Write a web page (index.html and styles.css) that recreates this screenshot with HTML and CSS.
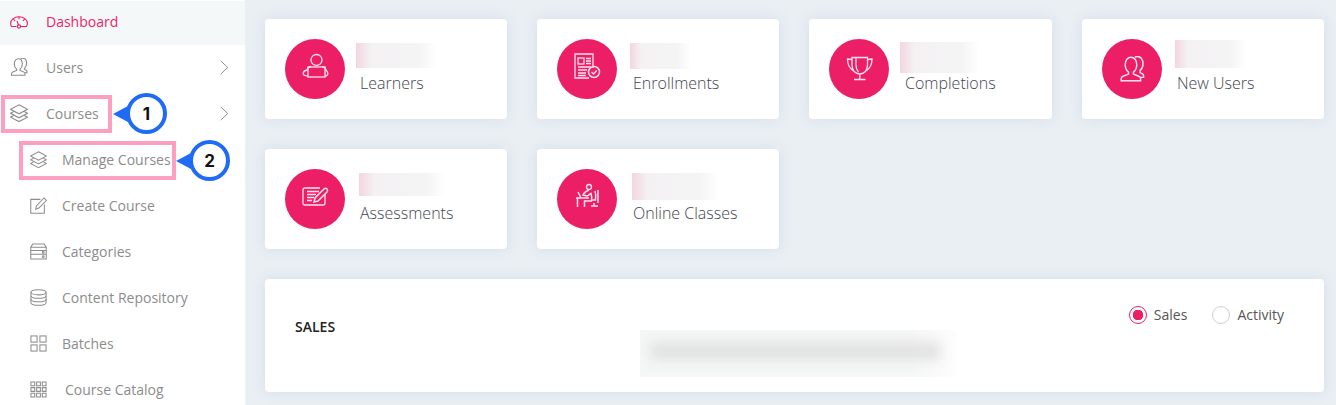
FILE: index.html
```html
<!DOCTYPE html>
<html lang="en">
<head>
    <meta charset="UTF-8">
    <title>Dashboard</title>
    <link rel="stylesheet" href="styles.css">
</head>
<body>
    <svg class="sprite" aria-hidden="true">
        <defs>
            <symbol id="person" viewBox="0 0 18 18">
                <path d="M6.6 11.2c-1.4-1-2.3-3-2.3-5.100C4.300 3 6 .8 8.300.8s4 2.200 4 5.300c0 2.100-.9 4.100-2.300 5.100v1.300l3.700 1.500c.8.3 1.300 1 1.300 1.900v1.300H1.500v-1.300c0-.9.5-1.600 1.300-1.900l3.800-1.500z"/>
                <path d="M11 .9c.5-.4 1.200-.6 1.800-.6 2.200 0 3.800 2.100 3.800 5 0 2-.8 3.800-2 4.800v1.400l1.700.8c.4.3.7.7.7 1.300v1.200h-2"/>
            </symbol>
            <symbol id="layers" viewBox="0 0 18 18">
                <path d="M9 .8 17.500 5.300 9 9.800 .5 5.300z"/>
                <path d="M3.800 7.600 .5 9.300l8.500 4.500 8.500-4.500-3.300-1.700"/>
                <path d="M3.800 11.500 .5 13.200 9 17.600l8.500-4.400-3.300-1.700"/>
            </symbol>
        </defs>
    </svg>

    <div class="layout">
        <nav class="sidebar">
            <a class="nav-item active">
                <svg class="nav-icon" viewBox="0 0 18 18">
                    <path d="M6.500 13.500H1.500C1 12.500.6 11.500.6 10.500.6 6.500 4.400 3.800 9 3.800s8.400 2.700 8.400 6.700c0 1-.4 2-.9 3H10.800"/>
                    <circle cx="9" cy="13.500" r="1.600"/>
                    <path d="M8.500 12 7 8M9 3.800v2.500M3.300 6.200l1.800 1.600M14.700 6.200l-1.800 1.600"/>
                </svg>
                <span>Dashboard</span>
            </a>
            <a class="nav-item">
                <svg class="nav-icon"><use href="#person"/></svg>
                <span>Users</span>
                <svg class="chevron" viewBox="0 0 10 16"><path d="M1.500 1 9 8l-7.500 7"/></svg>
            </a>
            <a class="nav-item">
                <svg class="nav-icon"><use href="#layers"/></svg>
                <span>Courses</span>
                <svg class="chevron" viewBox="0 0 10 16"><path d="M1.500 1 9 8l-7.500 7"/></svg>
            </a>
            <a class="nav-item sub">
                <svg class="nav-icon"><use href="#layers"/></svg>
                <span>Manage Courses</span>
            </a>
            <a class="nav-item sub">
                <svg class="nav-icon" viewBox="0 0 18 18">
                    <path d="M11 2.500H.8v14.700h14.400V8"/>
                    <path d="M6 13 6.800 9.500 14.800 1l2.600 2.500-8 8.200z"/>
                </svg>
                <span>Create Course</span>
            </a>
            <a class="nav-item sub">
                <svg class="nav-icon" viewBox="0 0 18 18">
                    <path d="M.8 8V4.500L3 1h12l2.200 3.500V8z"/>
                    <path d="M.8 4.500h16.400M.8 8v4h16.400V8M.8 12v5h16.400v-5"/>
                    <circle cx="14" cy="10" r=".9"/>
                    <circle cx="14" cy="14.500" r=".9"/>
                </svg>
                <span>Categories</span>
            </a>
            <a class="nav-item sub">
                <svg class="nav-icon" viewBox="0 0 18 18">
                    <ellipse cx="9" cy="3.500" rx="8" ry="2.700"/>
                    <path d="M1 3.500v11C1 16 4.600 17.200 9 17.200s8-1.200 8-2.700v-11"/>
                    <path d="M1 7.200c0 1.500 3.600 2.700 8 2.700s8-1.200 8-2.700M1 10.900c0 1.500 3.600 2.700 8 2.700s8-1.200 8-2.700"/>
                </svg>
                <span>Content Repository</span>
            </a>
            <a class="nav-item sub">
                <svg class="nav-icon" viewBox="0 0 18 18">
                    <rect x="1" y="1" width="6.500" height="6.500"/>
                    <rect x="10.500" y="1" width="6.500" height="6.500"/>
                    <rect x="1" y="10.500" width="6.500" height="6.500"/>
                    <rect x="10.500" y="10.500" width="6.500" height="6.500"/>
                </svg>
                <span>Batches</span>
            </a>
            <a class="nav-item sub catalog">
                <svg class="nav-icon" viewBox="0 0 18 18">
                    <path d="M1 1h4v4H1zM7 1h4v4H7zM13 1h4v4h-4zM1 7h4v4H1zM7 7h4v4H7zM13 7h4v4h-4zM1 13h4v4H1zM7 13h4v4H7zM13 13h4v4h-4z"/>
                </svg>
                <span>Course Catalog</span>
            </a>
        </nav>

        <main class="content">
            <section class="stats">
                <div class="stat-card">
                    <div class="stat-icon">
                        <svg viewBox="0 0 60 60">
                            <circle cx="31.500" cy="21" r="5.500"/>
                            <rect x="23" y="28" width="17" height="10"/>
                            <path d="M26 27.500c-2 .3-3.500 1.500-4 3.500-2 .5-3.800 1.800-3.800 3.600 0 1.800 1.600 2.400 4.800 2.400M37 27.500c2 .3 3.500 1.500 4 3.500 1 1 1.800 2.200 1.800 3.500 0 2-1.500 2.500-2.800 2.500"/>
                        </svg>
                    </div>
                    <div class="stat-text">
                        <div class="redacted redacted-learners"></div>
                        <div class="stat-label">Learners</div>
                    </div>
                </div>
                <div class="stat-card">
                    <div class="stat-icon">
                        <svg viewBox="0 0 60 60">
                            <path d="M32 39H18V15h18v14"/>
                            <rect x="21" y="19" width="6" height="6"/>
                            <path d="M29 19.500h5M29 22h5M29 24.500h5M21 28h13M21 31h9M21 34h8M21 36.500h8"/>
                            <circle cx="37" cy="33" r="5.500" class="heavy"/>
                            <path d="M34.500 33l2 2 3.200-3.600" class="heavy"/>
                        </svg>
                    </div>
                    <div class="stat-text wide">
                        <div class="redacted redacted-enrollments"></div>
                        <div class="stat-label">Enrollments</div>
                    </div>
                </div>
                <div class="stat-card">
                    <div class="stat-icon">
                        <svg viewBox="0 0 60 60">
                            <path d="M23 18.500h15.500v7c0 5.500-3 9-7.700 9.500-4.800-.5-7.800-4-7.800-9.500z"/>
                            <path d="M23 20.500l-4.500-.5c0 5 1.500 9 6 12M38.500 20.500l4.500-.5c0 5-1.500 9-6 12M27 19v7c0 3.500 1 5.500 2.500 7"/>
                            <path d="M30.800 35v5M25 40.500h11.500"/>
                        </svg>
                    </div>
                    <div class="stat-text wide">
                        <div class="redacted redacted-completions"></div>
                        <div class="stat-label">Completions</div>
                    </div>
                </div>
                <div class="stat-card">
                    <div class="stat-icon">
                        <svg class="stat-person" viewBox="0 0 18 18"><use href="#person"/></svg>
                    </div>
                    <div class="stat-text">
                        <div class="redacted redacted-new-users"></div>
                        <div class="stat-label">New Users</div>
                    </div>
                </div>
                <div class="stat-card">
                    <div class="stat-icon">
                        <svg viewBox="0 0 60 60">
                            <path d="M35 19H20c-1 0-2 .8-2 2v13c0 1.200 1 2 2 2h18c1.200 0 2-.8 2-2V25"/>
                            <path d="M22 22.500h12M22 25.500h9M22 28.500h7M22 31.500h5" class="heavy"/>
                            <path d="M29 33l1-4 9-9c1-1 2.200-1 3 0s.8 2 0 3l-9 9z" class="heavy"/>
                        </svg>
                    </div>
                    <div class="stat-text">
                        <div class="redacted redacted-assessments"></div>
                        <div class="stat-label">Assessments</div>
                    </div>
                </div>
                <div class="stat-card">
                    <div class="stat-icon">
                        <svg viewBox="0 0 60 60">
                            <circle cx="32" cy="18" r="2.500"/>
                            <path d="M19 29h13M20.500 29v9M21 23l3 6M32 21c-3 1-5 3-6 5l4 1c2-1 3-2 4-2.500 1 3 1 5 .5 7.500h-7v6M38 22c1 3 1 6 .5 9H35M41 21v13M34 37h7M37 34v3" class="heavy"/>
                        </svg>
                    </div>
                    <div class="stat-text wide">
                        <div class="redacted redacted-classes"></div>
                        <div class="stat-label">Online Classes</div>
                    </div>
                </div>
            </section>

            <section class="sales-card">
                <h2 class="sales-title">SALES</h2>
                <div class="sales-redacted"><div class="sales-smear"></div></div>
                <div class="sales-options">
                    <label class="radio-option"><span class="radio checked"></span>Sales</label>
                    <label class="radio-option"><span class="radio"></span>Activity</label>
                </div>
            </section>
        </main>
    </div>

    <!-- tutorial annotations laid over the sidebar -->
    <div class="mark mark-courses"></div>
    <div class="mark mark-manage"></div>
    <div class="callout callout-one">1</div>
    <div class="callout callout-two">2</div>
</body>
</html>
```

FILE: styles.css
```css
:root {
    --pink: #ec1f66;
    --nav-grey: #8c8c8c;
    --page-bg: #eaeff4;
    --callout-blue: #1f6bf5;
    --mark-pink: #fd9fbe;
}

* {
    box-sizing: border-box;
}

html,
body {
    height: 100%;
}

body {
    margin: 0;
    overflow: hidden;
    position: relative;
    font-family: "Open Sans", sans-serif;
    background: var(--page-bg);
}

.sprite {
    position: absolute;
    width: 0;
    height: 0;
}

#person,
#layers {
    overflow: visible;
}

.layout {
    display: flex;
    height: 100%;
}

/* sidebar */
.sidebar {
    flex: 0 0 245px;
    background: white;
    overflow: hidden;
}

.nav-item {
    display: flex;
    align-items: center;
    gap: 18px;
    height: 46px;
    padding: 0 16px 2px 10px;
    font-size: 14px;
    color: var(--nav-grey);
}

.nav-item.active {
    height: 45px;
    padding-bottom: 3px;
    background: #f4f8f9;
    border-top: 1px solid white;
    color: var(--pink);
}

.nav-item.sub {
    gap: 14px;
    padding-left: 30px;
}

.nav-item.catalog {
    gap: 17px;
}

.nav-icon {
    flex: none;
    width: 18px;
    height: 18px;
    fill: none;
    stroke: var(--nav-grey);
    stroke-width: 1.100;
}

.active .nav-icon {
    stroke: var(--pink);
}

.sub .nav-icon {
    width: 17px;
    height: 17px;
    margin-right: 1px;
}

.chevron {
    width: 10px;
    height: 15px;
    margin-left: auto;
    fill: none;
    stroke: var(--nav-grey);
    stroke-width: 1;
}

/* main area */
.content {
    flex: 1;
    min-width: 0;
    padding: 19px 12px 0 20px;
}

.stats {
    display: grid;
    grid-template-columns: 242px 242px 243px 242px;
    grid-auto-rows: 100px;
    gap: 30px;
}

.stat-card {
    display: flex;
    padding-left: 20px;
    background: white;
    border-radius: 4px;
    box-shadow: 0 0 14px rgba(175, 190, 210, 0.35);
}

.stat-icon {
    flex: none;
    width: 60px;
    height: 60px;
    margin-top: 20px;
    border-radius: 50%;
    background: var(--pink);
}

.stat-icon svg {
    display: block;
    width: 60px;
    height: 60px;
    fill: none;
    stroke: #ffe3ec;
    stroke-width: 1.300;
}

.stat-icon .heavy {
    stroke-width: 1.500;
}

.stat-icon .stat-person {
    width: 26px;
    height: 26px;
    margin: 17px 0 0 17px;
    stroke-width: 1;
}

.stat-text {
    display: flex;
    flex-direction: column;
    justify-content: flex-end;
    padding: 0 0 25px 15px;
}

.stat-text.wide {
    padding-left: 16px;
}

.stat-label {
    font-size: 16px;
    font-weight: 300;
    line-height: 22px;
    color: #3f4650;
    white-space: nowrap;
}

.redacted {
    background: linear-gradient(90deg, #f3d6df 0, #f4f1f3 18%, #f4f4f5 78%, white 100%);
}

.redacted-learners {
    width: 81px;
    height: 25px;
    margin: 0 0 4px -4px;
}

.redacted-enrollments {
    width: 61px;
    height: 26px;
    margin: 0 0 3px -3px;
}

.redacted-completions {
    width: 79px;
    height: 31px;
    margin: 0 0 -1px -5px;
}

.redacted-new-users {
    width: 71px;
    height: 28px;
    margin: 0 0 4px -2px;
}

.redacted-assessments {
    width: 87px;
    height: 23px;
    margin: 0 0 6px -1px;
}

.redacted-classes {
    width: 87px;
    height: 27px;
    margin: 0 0 2px -1px;
}

/* sales panel */
.sales-card {
    display: flex;
    align-items: flex-start;
    height: 113px;
    margin-top: 30px;
    padding: 0 40px 0 30px;
    background: white;
    border-radius: 4px;
    box-shadow: 0 0 14px rgba(175, 190, 210, 0.35);
}

.sales-title {
    flex: 0 0 345px;
    margin: 38px 0 0;
    font-size: 14px;
    font-weight: 600;
    line-height: 20px;
    color: #222;
}

.sales-redacted {
    width: 316px;
    height: 47px;
    margin-top: 51px;
    overflow: hidden;
    background: linear-gradient(90deg, #f5f6f6 0, #f5f6f6 85%, #fdfdfd 100%);
}

.sales-smear {
    width: 290px;
    height: 18px;
    margin: 12px 0 0 10px;
    background: #e2e2e2;
    filter: blur(6px);
}

.sales-options {
    display: flex;
    gap: 25px;
    margin-top: 26px;
    margin-left: auto;
}

.radio-option {
    display: flex;
    align-items: center;
    gap: 7px;
    font-size: 14px;
    line-height: 20px;
    color: #555;
}

.radio {
    width: 18px;
    height: 18px;
    border: 1px solid #cfcfcf;
    border-radius: 50%;
}

.radio.checked {
    border-color: var(--pink);
    background: radial-gradient(circle, var(--pink) 0, var(--pink) 5px, white 5.500px);
}

/* annotations */
.mark {
    position: absolute;
    border: 4px solid var(--mark-pink);
}

.mark-courses {
    left: 1px;
    top: 95px;
    width: 111px;
    height: 38px;
}

.mark-manage {
    left: 19px;
    top: 141px;
    width: 157px;
    height: 39px;
}

.callout {
    position: absolute;
    display: flex;
    align-items: center;
    justify-content: center;
    width: 41px;
    height: 41px;
    border: 4px solid var(--callout-blue);
    border-radius: 50%;
    background: white;
    font-family: Inter, sans-serif;
    font-size: 17px;
    font-weight: 700;
    color: #111;
}

.callout::before {
    content: "";
    position: absolute;
    left: -17px;
    top: 9px;
    border-top: 8px solid transparent;
    border-bottom: 8px solid transparent;
    border-right: 15px solid var(--callout-blue);
}

.callout-one {
    left: 126px;
    top: 93px;
}

.callout-two {
    left: 189px;
    top: 140px;
}
```
